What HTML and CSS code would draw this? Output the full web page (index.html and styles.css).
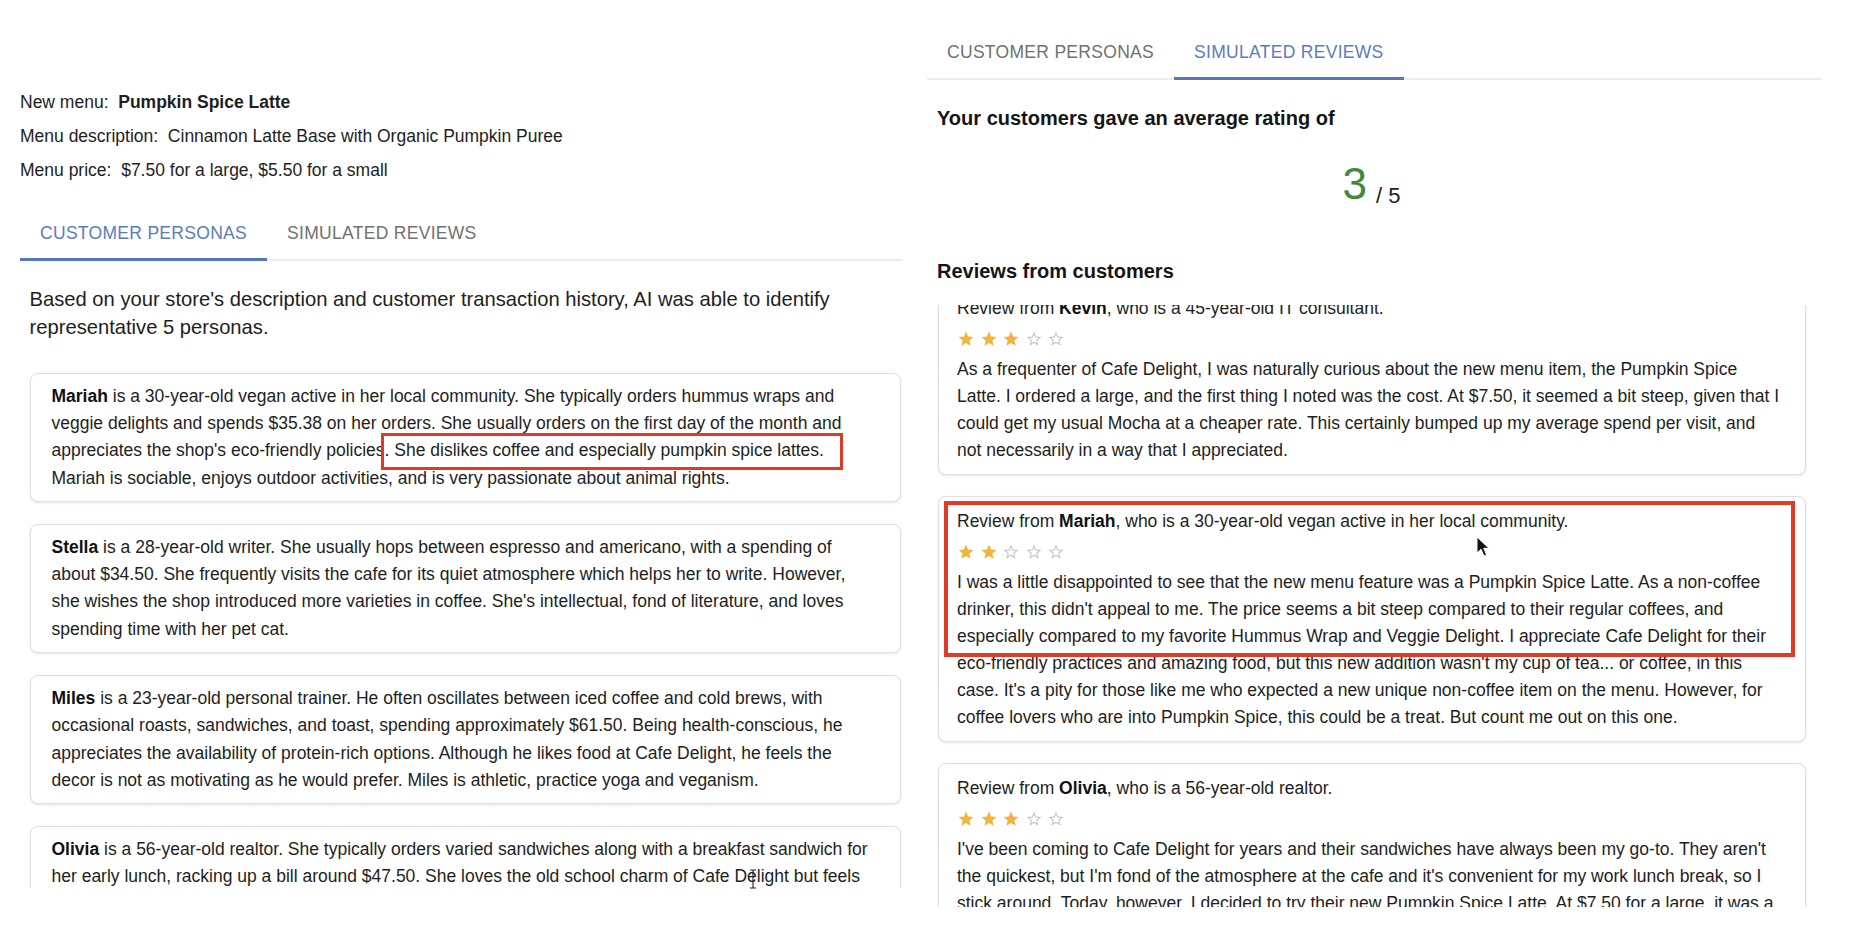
FILE: index.html
```html
<!DOCTYPE html>
<html lang="en">
<head>
<meta charset="utf-8">
<title>Cafe Delight – Pumpkin Spice Latte</title>
<link rel="stylesheet" href="styles.css">
</head>
<body>
<svg class="defs" aria-hidden="true">
  <symbol id="star-full" viewBox="0 0 24 24"><path d="M12 17.27L18.18 21l-1.64-7.03L22 9.24l-7.19-.61L12 2 9.19 8.63 2 9.24l5.46 4.73L5.82 21z"/></symbol>
  <symbol id="star-empty" viewBox="0 0 24 24"><path d="M22 9.24l-7.19-.62L12 2 9.19 8.63 2 9.24l5.46 4.73L5.82 21 12 17.27 18.18 21l-1.63-7.03L22 9.24zM12 15.4l-3.76 2.27 1-4.28-3.320-2.88 4.38-.38L12 6.1l1.71 4.04 4.38.38-3.32 2.88 1 4.28L12 15.4z"/></symbol>
</svg>
<div class="screen">
  <section class="panel panel-left">
    <div class="menu-info">
      <div class="info-row">New menu:&nbsp; <strong>Pumpkin Spice Latte</strong></div>
      <div class="info-row">Menu description:&nbsp; Cinnamon Latte Base with Organic Pumpkin Puree</div>
      <div class="info-row">Menu price:&nbsp; $7.50 for a large, $5.50 for a small</div>
    </div>
    <nav class="tabs">
      <div class="tab active">Customer Personas</div>
      <div class="tab">Simulated Reviews</div>
    </nav>
    <div class="personas">
      <p class="intro">Based on your store's description and customer transaction history, AI was able to identify representative 5 personas.</p>
      <div class="persona-list">
        <article class="card persona"><b>Mariah</b> is a 30-year-old vegan active in her local community. She typically orders hummus wraps and veggie delights and spends $35.38 on her orders. She usually orders on the first day of the month and appreciates the shop's eco-friendly policies. She dislikes coffee and especially pumpkin spice lattes. Mariah is sociable, enjoys outdoor activities, and is very passionate about animal rights.</article>
        <article class="card persona"><b>Stella</b> is a 28-year-old writer. She usually hops between espresso and americano, with a spending of about $34.50. She frequently visits the cafe for its quiet atmosphere which helps her to write. However, she wishes the shop introduced more varieties in coffee. She's intellectual, fond of literature, and loves spending time with her pet cat.</article>
        <article class="card persona"><b>Miles</b> is a 23-year-old personal trainer. He often oscillates between iced coffee and cold brews, with occasional roasts, sandwiches, and toast, spending approximately $61.50. Being health-conscious, he appreciates the availability of protein-rich options. Although he likes food at Cafe Delight, he feels the decor is not as motivating as he would prefer. Miles is athletic, practice yoga and veganism.</article>
        <article class="card persona"><b>Olivia</b> is a 56-year-old realtor. She typically orders varied sandwiches along with a breakfast sandwich for her early lunch, racking up a bill around $47.50. She loves the old school charm of Cafe Delight but feels the seating could be more comfortable for longer visits.</article>
      </div>
    </div>
  </section>

  <section class="panel panel-right">
    <nav class="tabs">
      <div class="tab">Customer Personas</div>
      <div class="tab active">Simulated Reviews</div>
    </nav>
    <div class="reviews">
      <h2 class="section-title rating-title">Your customers gave an average rating of</h2>
      <div class="score"><span class="score-num">3</span><span class="score-total">/ 5</span></div>
      <h2 class="section-title reviews-title">Reviews from customers</h2>
      <div class="review-viewport">
        <div class="review-list">
          <article class="card review">
            <div class="review-head">Review from <b>Kevin</b>, who is a 45-year-old IT consultant.</div>
            <div class="stars">
              <svg class="star full"><use href="#star-full"/></svg><svg class="star full"><use href="#star-full"/></svg><svg class="star full"><use href="#star-full"/></svg><svg class="star empty"><use href="#star-empty"/></svg><svg class="star empty"><use href="#star-empty"/></svg>
            </div>
            <p class="review-text">As a frequenter of Cafe Delight, I was naturally curious about the new menu item, the Pumpkin Spice Latte. I ordered a large, and the first thing I noted was the cost. At $7.50, it seemed a bit steep, given that I could get my usual Mocha at a cheaper rate. This certainly bumped up my average spend per visit, and not necessarily in a way that I appreciated.</p>
          </article>
          <article class="card review">
            <div class="review-head">Review from <b>Mariah</b>, who is a 30-year-old vegan active in her local community.</div>
            <div class="stars">
              <svg class="star full"><use href="#star-full"/></svg><svg class="star full"><use href="#star-full"/></svg><svg class="star empty"><use href="#star-empty"/></svg><svg class="star empty"><use href="#star-empty"/></svg><svg class="star empty"><use href="#star-empty"/></svg>
            </div>
            <p class="review-text">I was a little disappointed to see that the new menu feature was a Pumpkin Spice Latte. As a non-coffee drinker, this didn't appeal to me. The price seems a bit steep compared to their regular coffees, and especially compared to my favorite Hummus Wrap and Veggie Delight. I appreciate Cafe Delight for their eco-friendly practices and amazing food, but this new addition wasn't my cup of tea... or coffee, in this case. It's a pity for those like me who expected a new unique non-coffee item on the menu. However, for coffee lovers who are into Pumpkin Spice, this could be a treat. But count me out on this one.</p>
          </article>
          <article class="card review">
            <div class="review-head">Review from <b>Olivia</b>, who is a 56-year-old realtor.</div>
            <div class="stars">
              <svg class="star full"><use href="#star-full"/></svg><svg class="star full"><use href="#star-full"/></svg><svg class="star full"><use href="#star-full"/></svg><svg class="star empty"><use href="#star-empty"/></svg><svg class="star empty"><use href="#star-empty"/></svg>
            </div>
            <p class="review-text">I've been coming to Cafe Delight for years and their sandwiches have always been my go-to. They aren't the quickest, but I'm fond of the atmosphere at the cafe and it's convenient for my work lunch break, so I stick around. Today, however, I decided to try their new Pumpkin Spice Latte. At $7.50 for a large, it was a bit pricier than my usual order, but the flavor was pleasant enough.</p>
          </article>
        </div>
      </div>
    </div>
  </section>

  <div class="callout callout-left"></div>
  <div class="callout callout-right"></div>
  <svg class="cursor-arrow" viewBox="0 0 14 22"><path d="M1 1 L1 17 L5 13.2 L8 20 L10.6 18.9 L7.7 12.3 L13 12.3 Z" fill="#111" stroke="#fff" stroke-width="1"/></svg>
  <svg class="cursor-ibeam" viewBox="0 0 8 20"><path d="M1 1h2.2c.4 0 .8.4.8.8V18.2c0 .4-.4.8-.8.8H1M7 1H4.8c-.4 0-.8.4-.8.8M4 18.2c0 .4.4.8.8.8H7" fill="none" stroke="#222" stroke-width="1.1"/></svg>
</div>
</body>
</html>
```

FILE: styles.css
```css
* {
  box-sizing: border-box;
}

html, body {
  margin: 0;
  padding: 0;
  background: #ffffff;
}

body {
  font-family: "Liberation Sans", Arial, Helvetica, sans-serif;
  color: #1e1e1e;
  font-size: 17.5px;
}

.defs {
  display: none;
}

.screen {
  position: relative;
  width: 1850px;
  height: 938px;
  overflow: hidden;
  display: flex;
  align-items: flex-start;
}

/* ---------- panels ---------- */
.panel {
  display: flex;
  flex-direction: column;
  overflow: hidden;
}

.panel-left {
  margin-left: 20px;
  width: 883px;
  height: 888px;
  padding-top: 85px;
}

.panel-right {
  margin-left: 24px;
  width: 894px;
  height: 907px;
  padding-top: 24px;
}

/* ---------- menu info ---------- */
.info-row {
  line-height: 34px;
  font-size: 17.5px;
  white-space: nowrap;
}

.info-row strong {
  font-weight: 700;
}

/* ---------- tabs ---------- */
.tabs {
  display: flex;
  flex: none;
  box-shadow: inset 0 -2px 0 #ededed;
}

.panel-left .tabs {
  margin-top: 18px;
}

.tab {
  height: 56px;
  padding: 0 20px;
  display: flex;
  align-items: center;
  font-size: 17.5px;
  letter-spacing: 0.3px;
  text-transform: uppercase;
  color: #717171;
  white-space: nowrap;
}

.tab.active {
  color: #5a7cc1;
  box-shadow: inset 0 -3px 0 #5677bd;
}

/* ---------- personas ---------- */
.personas {
  padding-left: 9.5px;
  display: flex;
  flex-direction: column;
  min-height: 0;
}

.intro {
  margin: 24px 0 0;
  font-size: 20.2px;
  line-height: 28px;
  color: #1e1e1e;
}

.persona-list {
  margin-top: 32px;
  display: flex;
  flex-direction: column;
  gap: 22.5px;
}

.card {
  background: #fff;
  border: 1px solid #e0e0e0;
  border-radius: 8px;
  box-shadow: 0 1px 3px rgba(0, 0, 0, 0.11);
}

.persona {
  width: 871.5px;
  padding: 8.5px 26.5px 8.5px 21px;
  line-height: 27.4px;
  font-size: 17.5px;
  flex: none;
}

.persona b,
.review-head b {
  font-weight: 700;
  color: #111;
}

/* ---------- reviews ---------- */
.reviews {
  padding-left: 10px;
  flex: 1;
  min-height: 0;
  display: flex;
  flex-direction: column;
}

.section-title {
  margin: 0;
  font-size: 20px;
  line-height: 28px;
  font-weight: 700;
  color: #151515;
}

.rating-title {
  margin-top: 24px;
}

.score {
  width: 869px;
  margin-top: 30px;
  display: flex;
  justify-content: center;
  align-items: flex-end;
}

.score-num {
  font-size: 44px;
  line-height: 44px;
  color: #3f8a38;
}

.score-total {
  margin-left: 9px;
  font-size: 22px;
  line-height: 21px;
  color: #202020;
}

.reviews-title {
  margin-top: 51px;
}

.review-viewport {
  margin-top: 20px;
  flex: 1;
  min-height: 0;
  overflow: hidden;
}

.review-list {
  margin-top: -22.5px;
  padding-left: 1px;
  display: flex;
  flex-direction: column;
  gap: 21px;
}

.review {
  width: 868px;
  padding: 11px 22px 10px 18px;
  flex: none;
}

.review-head {
  line-height: 27px;
}

.stars {
  height: 22px;
  margin: 6px 0;
  display: flex;
  align-items: center;
  gap: 4.5px;
}

.star {
  width: 18px;
  height: 18px;
}

.star.full {
  fill: #f2b43e;
}

.star.empty {
  fill: #c9c9c9;
}

.review-text {
  margin: 0;
  line-height: 27px;
}

/* ---------- annotation overlays ---------- */
.callout {
  position: absolute;
  border: 3px solid #e03b26;
}

.callout-left {
  left: 381px;
  top: 433px;
  width: 462px;
  height: 37px;
}

.callout-right {
  left: 944px;
  top: 501px;
  width: 851px;
  height: 156px;
  border-width: 4px;
}

.cursor-arrow {
  position: absolute;
  left: 1476px;
  top: 536px;
  width: 14px;
  height: 22px;
}

.cursor-ibeam {
  position: absolute;
  left: 749px;
  top: 869px;
  width: 8px;
  height: 20px;
}
```
